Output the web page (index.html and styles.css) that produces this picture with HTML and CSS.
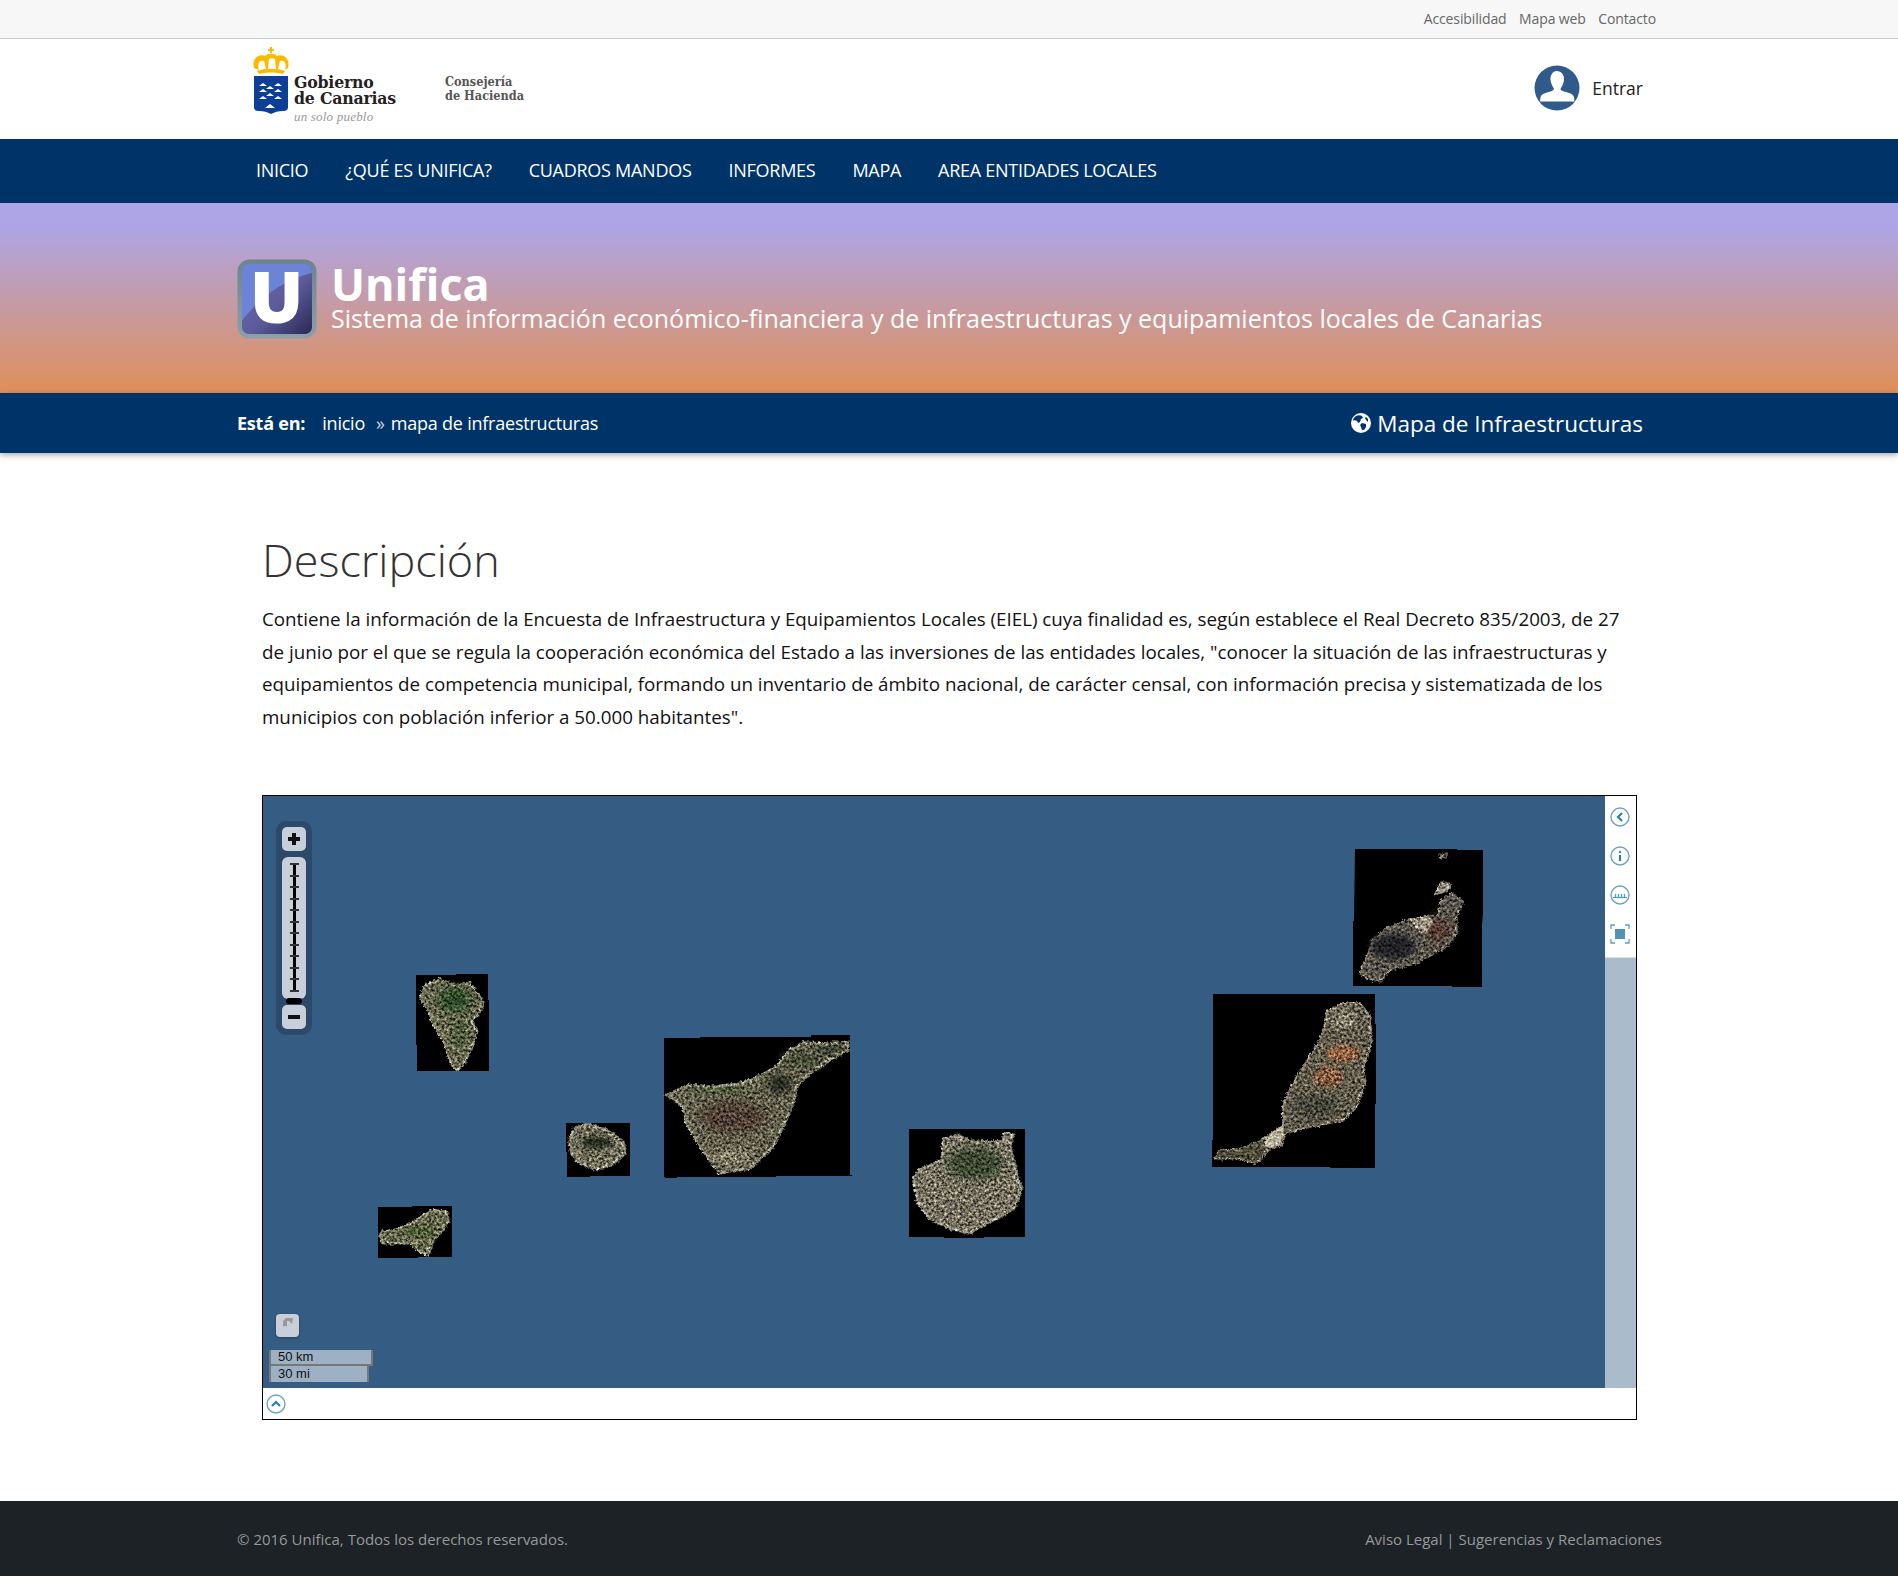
FILE: index.html
```html
<!DOCTYPE html>
<html lang="es">
<head>
<meta charset="utf-8">
<title>Unifica - Mapa de Infraestructuras</title>
<link rel="stylesheet" href="styles.css">
</head>
<body>
<div class="topbar"><div class="wrap topbar-in">
  <a>Accesibilidad</a><a>Mapa web</a><a>Contacto</a>
</div></div>

<header class="head"><div class="wrap head-in">
  <div class="logo">
    <svg class="shield" width="36" height="68" viewBox="0 0 36 68">
      <g fill="#fbb900">
        <rect x="17" y="0" width="2" height="6"/><rect x="15" y="2" width="6" height="2"/>
        <path d="M1 21C-2 11 7 6 12 9c2-3 10-3 12 0 5-3 14 2 11 12l-3 2c2-6 0-10-5-9l-2 8h-2l-1-10c-2-1-4-1-6 0l-1 10h-2l-2-8c-5-1-7 3-5 9z"/>
        <path d="M4 24c8-3 20-3 28 0l-2 3c-7-2-17-2-24 0z"/>
      </g>
      <path fill="#0c3f95" d="M1 29h34v31c0 3-2 4-5 4-5 0-8 1-12 3-4-2-7-3-12-3-3 0-5-1-5-4z"/>
      <g fill="#fff">
        <path d="M6 39l4-3 4 3zM21 39l4-3 4 3z"/><path d="M6 45l4-3 4 3zM21 45l4-3 4 3z"/>
        <path d="M13 42l4-3 4 3zM6 52l4-3 4 3zM21 52l4-3 4 3zM13 49l4-3 4 3zM12 61l5-4 5 4z"/>
      </g>
    </svg>
    <div class="logo-txt"><b>Gobierno</b><b>de Canarias</b><i>un solo pueblo</i></div>
    <div class="conse">Consejería<br>de Hacienda</div>
  </div>
  <a class="login">
    <svg width="46" height="46" viewBox="0 0 46 46">
      <circle cx="23" cy="23" r="22.5" fill="#305a8c"/>
      <path fill="#fff" d="M22.5 6c5 0 8 4 7.5 9-.4 4-2.5 7-3.5 9 0 1.500 3 2.500 7 3.500 3 .8 5.500 2 6.500 4.500l.500 4.500H6l.500-4.500c1-2.500 3.500-3.700 6.500-4.500 4-1 6.500-2 7-3.500-1-2-3-5-3.500-9-.5-5 2.500-9 6-9z"/>
    </svg>
    <span>Entrar</span>
  </a>
</div></header>

<nav class="nav"><div class="wrap nav-in">
  <a>INICIO</a><a>¿QUÉ ES UNIFICA?</a><a>CUADROS MANDOS</a><a>INFORMES</a><a>MAPA</a><a>AREA ENTIDADES LOCALES</a>
</div></nav>

<section class="banner"><div class="wrap banner-in">
  <div class="u">
    <svg width="80" height="80" viewBox="0 0 80 80">
      <defs>
        <linearGradient id="uf" x1="0" y1="0" x2="1" y2="1"><stop offset="0" stop-color="#6a6aaa"/><stop offset=".55" stop-color="#5c5c9a"/><stop offset="1" stop-color="#2b2855"/></linearGradient>
        <linearGradient id="ub" x1="0" y1="0" x2="0" y2="1"><stop offset="0" stop-color="#6d838d"/><stop offset="1" stop-color="#8ba0aa"/></linearGradient>
      </defs>
      <rect x=".5" y=".5" width="79" height="79" rx="12" fill="url(#ub)"/>
      <rect x="5" y="5" width="70" height="70" rx="7" fill="url(#uf)"/>
      <path d="M12 5h56a7 7 0 0 1 7 7v2C50 20 25 35 5 62V12a7 7 0 0 1 7-7z" fill="#6b84d8"/>
    </svg>
    <span class="u-letter">U</span>
  </div>
  <div class="titles">
    <h1>Unifica</h1>
    <p>Sistema de información económico-financiera y de infraestructuras y equipamientos locales de Canarias</p>
  </div>
</div></section>

<div class="crumbs"><div class="wrap crumbs-in">
  <div class="trail"><b>Está en:</b><a>inicio</a><span class="sep">»</span><a>mapa de infraestructuras</a></div>
  <div class="pagename">
    <svg width="20" height="20" viewBox="0 0 20 20">
      <circle cx="10" cy="10" r="10" fill="#fff"/>
      <path fill="#00346a" d="M5 3c2-1 4-1 6 0l1 2-2 1-1 3-2 1-1-2-3-1-1 1 0-1c.5-2 1.500-3 3-4zM11 10l4 1 0 3-2 3-2 0-1-3-1-2zM15 4l2 2 0 3-2-2-1-2z"/>
    </svg>
    <span>Mapa de Infraestructuras</span>
  </div>
</div></div>

<main class="content">
  <h2>Descripción</h2>
  <p class="desc">Contiene la información de la Encuesta de Infraestructura y Equipamientos Locales (EIEL) cuya finalidad es, según establece el Real Decreto 835/2003, de 27 de junio por el que se regula la cooperación económica del Estado a las inversiones de las entidades locales, "conocer la situación de las infraestructuras y equipamientos de competencia municipal, formando un inventario de ámbito nacional, de carácter censal, con información precisa y sistematizada de los municipios con población inferior a 50.000 habitantes".</p>

  <div class="mapbox">
    <div class="map-row">
      <div class="map">
        <svg class="islands" width="1342" height="592" viewBox="263 796 1342 592">
          <defs>
            <filter id="rock" x="-5%" y="-5%" width="110%" height="110%" color-interpolation-filters="sRGB">
              <feTurbulence type="fractalNoise" baseFrequency=".38" numOctaves="3" seed="7" result="n"/>
              <feDisplacementMap in="SourceGraphic" in2="n" scale="5" xChannelSelector="R" yChannelSelector="G" result="d"/>
              <feColorMatrix in="n" type="matrix" values="1.5 0 0 0 -.25 1.5 0 0 0 -.25 1.5 0 0 0 -.25 0 0 0 0 1" result="g"/>
              <feComposite in="g" in2="d" operator="in" result="gi"/>
              <feBlend in="gi" in2="d" mode="overlay" result="b"/>
              <feGaussianBlur in="b" stdDeviation=".5"/>
            </filter>
            <filter id="soft" x="-40%" y="-40%" width="180%" height="180%"><feGaussianBlur stdDeviation="14"/></filter>
            <filter id="soft2" x="-40%" y="-40%" width="180%" height="180%"><feGaussianBlur stdDeviation="8"/></filter>
          </defs>
          <g fill="#000">
            <path d="M416 975h40v-1h32v26h1v71h-72v-26h-1z"/>
            <path d="M566 1123h64v53h-40v1h-23v-25h-1z"/>
            <path d="M664 1038h36v-1h111v-2h39v140h2v1h-76v1h-99v1h-12v-1h-1z"/>
            <path d="M378 1207h34v-1h40v51h-34v1h-40z"/>
            <path d="M909 1129h116v108h-41v1h-40v-1h-35z"/>
            <path d="M1213 994h162v30h1v80h-1v64h-45v-1h-118v-27h1z"/>
            <path d="M1355 849h102v1h26v64l-1 10v63h-30v-1h-99v-65h1z"/>
          </g>
          <g filter="url(#rock)">
            <g transform="translate(400 960) scale(.3333)">
              <polygon fill="#66664e" stroke="#8f8f78" stroke-width="6" points="60,115 75,75 120,58 165,75 210,68 250,125 245,150 215,185 232,215 215,265 190,315 170,330 150,305 130,240 100,195 85,150"/>
              <ellipse cx="165" cy="120" rx="52" ry="36" fill="#2f4a28" filter="url(#soft)"/>
              <ellipse cx="180" cy="220" rx="20" ry="44" fill="#445434" filter="url(#soft)"/>
              <polygon fill="#6f6c58" stroke="#94917d" stroke-width="7" points="508,540 525,505 560,492 620,510 670,545 675,580 640,610 590,628 540,610 515,580"/>
              <ellipse cx="590" cy="548" rx="46" ry="18" fill="#232a1b" filter="url(#soft2)"/>
              <polygon fill="#66684e" stroke="#949379" stroke-width="6" points="-55,815 -10,808 30,790 65,770 100,750 140,755 145,785 125,815 100,840 85,885 60,875 30,850 -10,850 -50,850 -62,830"/>
              <ellipse cx="60" cy="815" rx="48" ry="14" fill="#465833" filter="url(#soft2)"/>
              <polygon fill="#625f4d" stroke="#8b8a74" stroke-width="7" points="800,405 865,375 940,380 1010,372 1060,358 1130,320 1170,270 1210,248 1280,250 1345,245 1345,270 1290,300 1230,340 1190,380 1180,430 1150,500 1120,560 1050,625 960,640 930,600 900,560 860,490 850,440"/>
              <ellipse cx="1000" cy="470" rx="100" ry="50" fill="#4f4034" filter="url(#soft)"/>
              <ellipse cx="1000" cy="590" rx="60" ry="24" fill="#837e69" filter="url(#soft)"/>
              <ellipse cx="1140" cy="372" rx="36" ry="26" fill="#1f2419" filter="url(#soft)"/>
              <ellipse cx="1210" cy="300" rx="60" ry="20" fill="#3c472d" filter="url(#soft)"/>
              <ellipse cx="1290" cy="268" rx="42" ry="10" fill="#2c342b" filter="url(#soft2)"/>
              <ellipse cx="960" cy="392" rx="100" ry="8" fill="#475530" filter="url(#soft2)"/>
            </g>
            <g transform="translate(880 1100) scale(.3333)">
              <polygon fill="#757060" stroke="#a29d88" stroke-width="6" points="100,235 120,210 185,180 190,120 230,105 280,125 370,125 372,100 400,100 390,140 400,180 415,240 425,265 405,320 360,350 290,385 270,400 210,385 150,355 115,310"/>
              <ellipse cx="285" cy="190" rx="85" ry="50" fill="#3e4631" filter="url(#soft)"/>
            </g>
            <g transform="translate(1200 840) scale(.3333)">
              <polygon fill="#5f5a4b" stroke="#8e8672" stroke-width="6" points="380,515 430,490 480,490 510,530 515,610 490,680 495,730 470,800 430,840 330,860 255,880 245,915 210,925 170,970 120,955 45,955 60,930 110,930 180,905 215,880 250,855 250,790 285,720 330,650 360,600 380,540"/>
              <ellipse cx="430" cy="640" rx="50" ry="26" fill="#916242" filter="url(#soft2)"/>
              <ellipse cx="385" cy="710" rx="44" ry="32" fill="#855c40" filter="url(#soft2)"/>
              <ellipse cx="350" cy="800" rx="70" ry="34" fill="#424237" filter="url(#soft)"/>
              <ellipse cx="430" cy="540" rx="40" ry="26" fill="#857e6a" filter="url(#soft2)"/>
              <polygon fill="#b5ae97" points="215,880 250,855 250,885 240,915 205,925 190,905"/>
              <polygon fill="#4e4c39" points="45,955 60,930 110,930 180,905 195,930 170,970 120,955"/>
              <polygon fill="#57534a" stroke="#7c7264" stroke-width="5" points="480,400 520,300 560,265 620,240 680,228 715,228 725,180 755,160 790,185 770,230 770,280 740,320 650,370 570,390 540,425 500,415"/>
              <ellipse cx="580" cy="320" rx="66" ry="38" fill="#222125" filter="url(#soft2)"/>
              <ellipse cx="715" cy="270" rx="40" ry="36" fill="#533b32" filter="url(#soft)"/>
              <polygon fill="#9f9686" points="630,240 680,228 700,240 680,280 650,265"/>
              <polygon fill="#948e80" points="702,165 725,125 755,130 745,155"/>
              <polygon fill="#777564" points="715,45 745,38 745,50 725,58"/>
            </g>
          </g>
        </svg>

        <div class="zoom">
          <button class="zbtn"><svg width="12" height="12" viewBox="0 0 12 12"><path d="M4 0h4v4h4v4H8v4H4V8H0V4h4z" fill="#111"/></svg></button>
          <div class="zslider">
            <div class="ztrack">
              <i></i><i></i><i></i><i></i><i></i><i></i><i></i><i></i><i></i><i></i><i></i><i></i>
            </div>
          </div>
          <span class="zthumb"></span>
          <button class="zbtn"><svg width="12" height="4" viewBox="0 0 12 4"><rect width="12" height="4" fill="#111"/></svg></button>
        </div>

        <button class="layers"><svg width="12" height="10" viewBox="0 0 12 10"><path d="M1 3l3-3h7l-1 6-3-3H5v5H1z" fill="#999"/></svg></button>
        <div class="scale">
          <div class="sc1">50 km</div>
          <div class="sc2">30 mi</div>
        </div>
      </div>
      <aside class="side">
        <div class="tools">
          <svg width="20" height="20" viewBox="0 0 20 20"><circle cx="10" cy="10" r="9" class="ic-ring"/><path d="M12 6l-4 4 4 4" class="ic-line"/></svg>
          <svg width="20" height="20" viewBox="0 0 20 20"><circle cx="10" cy="10" r="9" class="ic-ring"/><path d="M10 9v6" class="ic-line"/><circle cx="10" cy="6" r="1.300" class="ic-fill"/></svg>
          <svg width="20" height="20" viewBox="0 0 20 20"><circle cx="10" cy="10" r="9" class="ic-ring"/><path d="M3 12.500h14" class="ic-thin"/><path d="M5.500 12V9M8.500 12V9M11.500 12V9M14.500 12V9" class="ic-thin"/></svg>
          <svg width="20" height="20" viewBox="0 0 20 20"><path d="M1 5V1h4M15 1h4v4M19 15v4h-4M5 19H1v-4" class="ic-thin"/><rect x="5" y="5" width="10" height="10" class="ic-fill"/></svg>
        </div>
        <div class="side-fill"></div>
      </aside>
    </div>
    <div class="map-foot">
      <svg width="20" height="20" viewBox="0 0 20 20"><circle cx="10" cy="10" r="9" class="ic-ring"/><path d="M6 12l4-4 4 4" class="ic-line"/></svg>
    </div>
  </div>
</main>

<footer class="foot"><div class="wrap foot-in">
  <span>© 2016 Unifica, Todos los derechos reservados.</span>
  <span>Aviso Legal | Sugerencias y Reclamaciones</span>
</div></footer>
</body>
</html>
```

FILE: styles.css
```css
* { box-sizing: border-box; }
html, body { margin: 0; padding: 0; }
body { font-family: "Open Sans", "Noto Sans", sans-serif; color: #111; background: #fff; width: 1898px; }
.wrap { width: 1424px; margin-left: 237px; }

.topbar { height: 39px; background: #f7f7f7; border-bottom: 1px solid #ccc; }
.topbar-in { display: flex; justify-content: flex-end; align-items: center; height: 36px; gap: 12.5px; padding-right: 5px; font-size: 14px; letter-spacing: -.12px; color: #666; }

.head { height: 100px; background: #fff; }
.head-in { display: flex; justify-content: space-between; align-items: center; height: 100px; width: 1406px; }
.logo { display: flex; align-items: flex-start; padding-left: 16px; height: 76px; margin-top: -20px; }
.shield { display: block; margin-top: 6px; flex: none; }
.logo-txt { display: flex; flex-direction: column; margin-left: 5px; margin-top: 33px; font-family: "DejaVu Serif Condensed", "DejaVu Serif", serif; color: #222; font-size: 17.5px; line-height: 16px; }
.logo-txt b { display: block; letter-spacing: -.2px; }
.logo-txt i { display: block; color: #999; line-height: 18px; margin-top: 2px; font-family: "Liberation Serif", serif; font-size: 13px; letter-spacing: .2px; }
.conse { margin-left: 49px; margin-top: 34px; font-family: "DejaVu Serif Condensed", "DejaVu Serif", serif; font-weight: 700; font-size: 12.6px; line-height: 13.5px; color: #555; }
.login { display: flex; align-items: center; gap: 12px; font-size: 17.5px; color: #222; margin-top: -2px; }
.login svg { display: block; }

.nav { height: 64px; background: #003468; }
.nav-in { display: flex; align-items: center; height: 62px; gap: 37px; padding-left: 19px; font-size: 18px; color: #fff; letter-spacing: -.27px; }

.banner { height: 190px; background: linear-gradient(to bottom, #aea5e6 0%, #aea5e6 12%, #e08f59 100%); }
.banner-in { display: flex; align-items: flex-start; padding-top: 56px; width: 1406px; }
.u { position: relative; width: 80px; height: 80px; flex: none; }
.u svg { display: block; }
.u-letter { position: absolute; left: 0; top: 0; width: 79px; text-align: center; font-weight: 800; font-size: 71px; line-height: 73px; color: #fff; }
.titles { margin-left: 14px; color: #fff; }
.titles h1 { margin: 6px 0 0; font-size: 45px; line-height: 38px; font-weight: 700; }
.titles p { margin: 0; font-size: 25px; line-height: 30px; white-space: nowrap; }

.crumbs { height: 60px; background: #003468; color: #fff; box-shadow: 0 2px 6px rgba(0,0,0,.35); position: relative; }
.crumbs-in { display: flex; justify-content: space-between; align-items: center; height: 60px; width: 1406px; }
.trail { display: flex; align-items: center; font-size: 18px; letter-spacing: -.22px; }
.trail b { margin-right: 17px; }
.trail .sep { margin: 0 6px 0 11px; color: #c4d0de; }
.pagename { display: flex; align-items: center; gap: 6px; font-size: 22.5px; }
.pagename svg { display: block; }

.content { margin-left: 262px; width: 1375px; height: 1048px; padding-top: 77px; }
.content h2 { margin: 0; font-size: 45px; font-weight: 300; line-height: 60px; color: #333; }
.desc { margin: 13px 0 0; font-size: 18.77px; line-height: 32.5px; color: #111; width: 1370px; }

.mapbox { margin-top: 62px; width: 1375px; height: 625px; border: 1px solid #000; display: flex; flex-direction: column; background: #fff; }
.map-row { display: flex; height: 592px; }
.map { position: relative; width: 1342px; height: 592px; background: #355c82; overflow: hidden; flex: none; }
.islands { position: absolute; left: 0; top: 0; display: block; }

.zoom { position: absolute; left: 13px; top: 25px; width: 36px; height: 214px; padding: 6px; border-radius: 10px; background: #2b4a69; display: flex; flex-direction: column; }
.zbtn { width: 24px; height: 24px; border: 0; padding: 0; border-radius: 5px; background: #c8cfd8; display: flex; align-items: center; justify-content: center; flex: none; }
.zslider { margin-top: 6px; margin-bottom: 6px; width: 24px; height: 142px; border-radius: 6px; background: #c8cfd8; padding-top: 6px; }
.ztrack { width: 3px; height: 129px; margin-left: 10.5px; background: #000; display: flex; flex-direction: column; justify-content: space-between; }
.ztrack i { display: block; width: 9px; height: 2px; margin-left: -3px; background: #333; }
.zthumb { position: absolute; left: 10px; top: 177px; width: 16px; height: 6px; border-radius: 3px; background: #000; }

.layers { position: absolute; left: 13px; top: 518px; width: 23px; height: 23px; padding: 0 0 6px; border: 0; border-radius: 4px; background: #c8cfd8; display: flex; align-items: center; justify-content: center; box-shadow: 0 1px 3px rgba(0,0,0,.3); }
.scale { position: absolute; left: 6px; top: 554px; font: 13px/16px "Liberation Sans", Arial, sans-serif; color: #111; }
.sc1, .sc2 { background: #9db0c4; padding-left: 7px; height: 16px; border-left: 2px solid #777; border-right: 2px solid #777; }
.sc1 { width: 104px; border-bottom: 2px solid #777; line-height: 13px; height: 16px; }
.sc2 { width: 100px; border-bottom: 0; height: 16px; line-height: 15px; }

.side { width: 31px; display: flex; flex-direction: column; background: #fff; }
.tools { height: 162px; padding: 11px 0 0 5px; display: flex; flex-direction: column; gap: 19px; border-bottom: 1px solid #ddd; }
.tools svg { display: block; flex: none; }
.side-fill { flex: 1; background: #aabbcc; }

.ic-ring { fill: none; stroke: #6ca3c0; stroke-width: 1.4; }
.ic-line { fill: none; stroke: #2d7fa5; stroke-width: 2.2; }
.ic-thin { fill: none; stroke: #5c9dbd; stroke-width: 1.3; }
.ic-fill { fill: #4f93b7; }

.map-foot { height: 31px; padding: 6px 0 0 3px; }
.map-foot svg { display: block; }

.foot { height: 75px; background: #1c2226; color: #999; font-size: 15px; }
.foot-in { display: flex; justify-content: space-between; align-items: center; height: 75px; width: 1425px; }
```
